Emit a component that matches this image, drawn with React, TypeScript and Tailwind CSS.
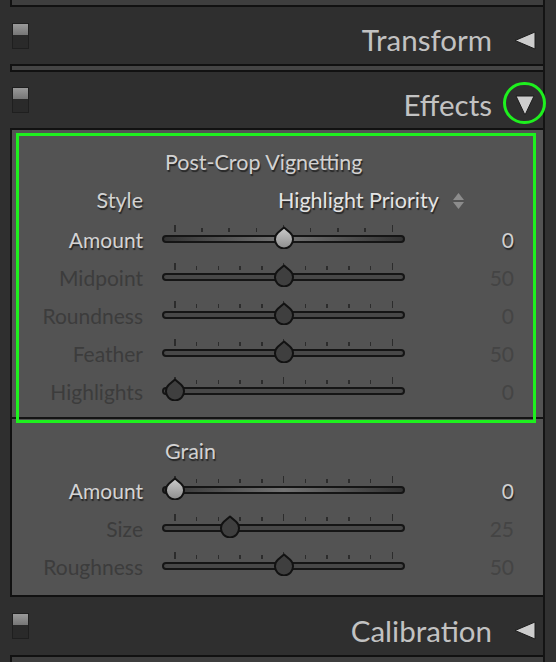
import React from 'react';

const GREEN = 'border-[#1ef01e]';

const Switch = () => (
  <div className="w-[17px] h-[26px] border border-[#1f1f1f] flex flex-col">
    <div className="h-[11px] bg-[linear-gradient(to_bottom,#9a9a9a,#767676)]" />
    <div className="flex-1 bg-[#2a2a2a]" />
  </div>
);

const Bar = () => (
  <div className="shrink-0 ml-[10px] h-[8px] border-y-2 border-l-2 border-[#111] bg-[#454545]" />
);

const LeftArrow = () => (
  <svg width="22" height="19" viewBox="0 0 22 19">
    <path d="M1 9.5 L21 1 L21 18 Z" fill="#cdcdcd" stroke="#1c1c1c" strokeWidth="1" strokeLinejoin="round" />
  </svg>
);

const DownArrow = () => (
  <svg width="22" height="22" viewBox="0 0 22 22">
    <path d="M2 2 L20 2 L11 21 Z" fill="#cdcdcd" stroke="#1c1c1c" strokeWidth="1" strokeLinejoin="round" />
  </svg>
);

const Header = ({ title, open, h }: { title: string; open?: boolean; h: string }) => (
  <div className={`${h} shrink-0 pl-[12px] pr-[7px] flex items-center justify-between`}>
    <Switch />
    <div className="flex items-center pt-[9px]">
      <span className="text-[29.5px] leading-none text-[#c2c2c2]">{title}</span>
      <div className="relative ml-[22px] w-[22px] flex items-center justify-center">
        {open ? <DownArrow /> : <LeftArrow />}
        {open && (
          <div className={`absolute left-[-11px] top-[-12px] w-[43px] h-[42px] rounded-full border-[3px] ${GREEN}`} />
        )}
      </div>
    </div>
  </div>
);

const Thumb = ({ active, left }: { active: boolean; left: number }) => (
  <svg className="absolute top-[5px]" style={{ left }} width="24" height="24" viewBox="0 0 24 24">
    <defs>
      <linearGradient id="thumbLight" x1="0" y1="0" x2="0" y2="1">
        <stop offset="0" stopColor="#cccccc" />
        <stop offset="1" stopColor="#8e8e8e" />
      </linearGradient>
    </defs>
    <path
      d="M12 2.5 L17.9 7.6 A9 9 0 1 1 6.1 7.6 Z"
      fill={active ? 'url(#thumbLight)' : '#3f3f3f'}
      stroke="#121212"
      strokeWidth="2"
      strokeLinejoin="round"
    />
  </svg>
);

const Slider = ({ value, min, max, ticks, active }: { value: number; min: number; max: number; ticks: number; active: boolean }) => {
  const f = (value - min) / (max - min);
  const cx = 13 + f * 218;
  return (
    <div className="relative w-[243px] h-[38px] pt-[5px]">
      <div className="h-[7px] px-[12px] flex justify-between items-end">
        {Array.from({ length: ticks }).map((_, i) => (
          <div
            key={i}
            className={`w-[1.5px] bg-[#2c2c2c] ${i === 0 || i === ticks - 1 || i === (ticks - 1) / 2 ? 'h-[7px]' : 'h-[4px]'}`}
          />
        ))}
      </div>
      <div
        className={`mt-[3px] h-[8px] rounded-full border-2 border-[#151515] ${
          active ? 'bg-[linear-gradient(to_right,#333333,#737373_50%,#333333)]' : 'bg-[#484848]'
        }`}
      />
      <Thumb active={active} left={cx - 12} />
    </div>
  );
};

const SHADOW = '[text-shadow:1px_2px_1px_rgba(0,0,0,0.55)]';

const Row = ({ label, value, min, max, ticks, active }: { label: string; value: number; min: number; max: number; ticks: number; active?: boolean }) => (
  <div className="h-[38px] flex items-center text-[21px]">
    <div className={`w-[131px] text-right ${active ? `text-[#d4d4d4] ${SHADOW}` : 'text-[#3c3c3c]'}`}>{label}</div>
    <div className="ml-[19px]">
      <Slider value={value} min={min} max={max} ticks={ticks} active={!!active} />
    </div>
    <div className={`flex-1 text-right pr-[29px] ${active ? `text-[#d0d0d0] ${SHADOW}` : 'text-[#444444]'}`}>{value}</div>
  </div>
);

const Title = ({ children }: { children: React.ReactNode }) => (
  <div className={`h-[38px] flex items-center pl-[153px] text-[21.5px] text-[#d2d2d2] ${SHADOW}`}>{children}</div>
);

export default function App() {
  return (
    <div className="w-[556px] h-[662px] overflow-hidden bg-[#2f2f2f] flex font-['Lato',sans-serif] leading-none">
      <div className="w-[543px] flex flex-col">
        <div className="shrink-0 ml-[10px] h-[7px] border-b-2 border-l-2 border-[#111] bg-[#3e3e3e]" />
        <Header title="Transform" h="h-[57px]" />
        <Bar />
        <Header title="Effects" open h="h-[56px]" />

        <div className="shrink-0 ml-[10px] border-y-2 border-l-2 border-[#111] bg-[#535353]">
          <div className="relative pt-[14px] pb-[7px]">
            <Title>Post-Crop Vignetting</Title>
            <div className="h-[38px] flex items-center text-[21.5px]">
              <div className={`w-[131px] text-right text-[#d2d2d2] ${SHADOW}`}>Style</div>
              <div className="ml-[19px] pl-[116px] flex items-center gap-[14px]">
                <span className={`text-[#e4e4e4] ${SHADOW}`}>Highlight Priority</span>
                <div className="flex flex-col gap-[2px]">
                  <svg width="11" height="7" viewBox="0 0 11 7"><path d="M5.5 0 L11 7 L0 7 Z" fill="#8c8c8c" /></svg>
                  <svg width="11" height="7" viewBox="0 0 11 7"><path d="M0 0 L11 0 L5.5 7 Z" fill="#8c8c8c" /></svg>
                </div>
              </div>
            </div>
            <Row label="Amount" value={0} min={-100} max={100} ticks={9} active />
            <Row label="Midpoint" value={50} min={0} max={100} ticks={11} />
            <Row label="Roundness" value={0} min={-100} max={100} ticks={11} />
            <Row label="Feather" value={50} min={0} max={100} ticks={11} />
            <Row label="Highlights" value={0} min={0} max={100} ticks={11} />
            <div className={`absolute left-[4px] top-[3px] w-[520px] h-[290px] border-[3px] ${GREEN} z-10`} />
          </div>
          <div className="h-[2px] bg-[#141414]" />
          <div className="pt-[14px] pb-[10px]">
            <Title>Grain</Title>
            <Row label="Amount" value={0} min={0} max={100} ticks={11} active />
            <Row label="Size" value={25} min={0} max={100} ticks={11} />
            <Row label="Roughness" value={50} min={0} max={100} ticks={11} />
          </div>
        </div>

        <Header title="Calibration" h="h-[58px]" />
        <div className="shrink-0 ml-[10px] h-[12px] border-t-2 border-l-2 border-[#111] bg-[#3e3e3e]" />
      </div>
      <div className="w-[2px] bg-[#141414]" />
      <div className="flex-1 bg-[#313131]" />
    </div>
  );
}
